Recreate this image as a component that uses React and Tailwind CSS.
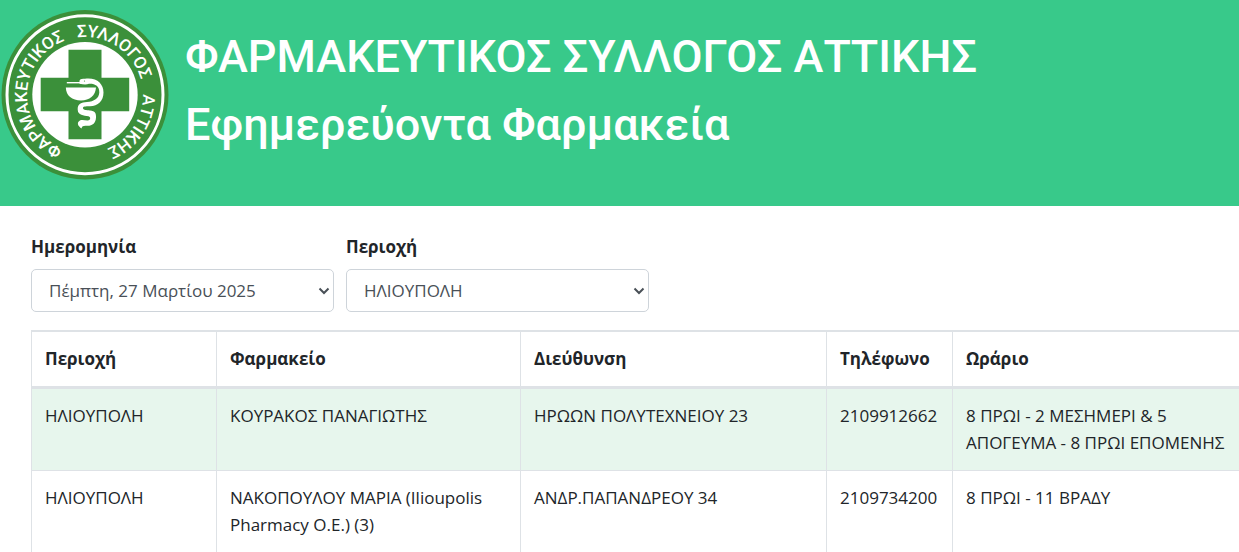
const rows = [
  {
    area: "ΗΛΙΟΥΠΟΛΗ",
    name: "ΚΟΥΡΑΚΟΣ ΠΑΝΑΓΙΩΤΗΣ",
    address: "ΗΡΩΩΝ ΠΟΛΥΤΕΧΝΕΙΟΥ 23",
    phone: "2109912662",
    hours: "8 ΠΡΩΙ - 2 ΜΕΣΗΜΕΡΙ & 5 ΑΠΟΓΕΥΜΑ - 8 ΠΡΩΙ ΕΠΟΜΕΝΗΣ",
  },
  {
    area: "ΗΛΙΟΥΠΟΛΗ",
    name: "ΝΑΚΟΠΟΥΛΟΥ ΜΑΡΙΑ (Ilioupolis Pharmacy Ο.Ε.) (3)",
    address: "ΑΝΔΡ.ΠΑΠΑΝΔΡΕΟΥ 34",
    phone: "2109734200",
    hours: "8 ΠΡΩΙ - 11 ΒΡΑΔΥ",
  },
];

const columns = ["Περιοχή", "Φαρμακείο", "Διεύθυνση", "Τηλέφωνο", "Ωράριο"];

function Logo() {
  return (
    <svg viewBox="0 0 168 170" className="h-[170px] w-[168px] shrink-0" role="img" aria-label="Φαρμακευτικός Σύλλογος Αττικής">
      <defs>
        <path id="ring" d="M84 143 A58 58 0 0 1 84 27 A58 58 0 0 1 84 143" />
      </defs>
      <ellipse cx="84" cy="84.7" rx="83.5" ry="84.7" fill="#3b903a" />
      <ellipse cx="84" cy="84.7" rx="78" ry="79" fill="none" stroke="#fff" strokeWidth="3" />
      <circle cx="84" cy="84.7" r="52.7" fill="#fff" />
      <path d="M67.5 39.8h33V67.7h27.7v33.5h-27.7V129.3h-33v-28.1H39.7V67.7H67.5z" fill="#3b903a" />
      <g className="font-['Roboto',sans-serif] text-[17px] font-medium" fill="#fff" textAnchor="middle">
        <text><textPath href="#ring" startOffset="25.3%">ΦΑΡΜΑΚΕΥΤΙΚΟΣ</textPath></text>
        <text><textPath href="#ring" startOffset="59.3%">ΣΥΛΛΟΓΟΣ</textPath></text>
        <text><textPath href="#ring" startOffset="84.3%">ΑΤΤΙΚΗΣ</textPath></text>
      </g>
      <path d="M64.8 77.5H95C94.5 85.5 88.5 90.5 80 90.5C71 90.5 65 85.5 64.8 77.5Z" fill="#fff" />
      <path d="M65.8 72.7H80" stroke="#fff" strokeWidth="1.4" />
      <path d="M78.5 71.6C78 69.3 80.5 68.3 84 68.8C96 67.3 102.5 74 102.5 82.5C102.5 91 97 96 89 96.3C84 96.5 82 96.2 82 98.1C82 100.1 85 100.3 89 100.5C94 100.8 95.3 103.5 95 107.5C94.8 113 91.5 116 86 115.8C82.5 115.5 81 116 80.5 118.5C77.5 116.5 76 114 77.5 111.8C79.5 109 83 110.3 86.5 110.5C89.5 110.7 90.3 107 87.5 106.3C82.5 105.5 77 105.5 76.7 99.8C76.3 93.5 80.5 92.5 86 92C93 91.5 98 88.5 98.3 82.5C98.5 76 94 73.5 88 73.8C85.5 75 82.5 74.7 78.5 73.8Z" fill="#fff" />
      <circle cx="83.5" cy="71" r="0.6" fill="#3b903a" />
    </svg>
  );
}

function Filter({ id, label, value }) {
  return (
    <div className="flex w-[303px] flex-col gap-[9px]">
      <label htmlFor={id} className="font-bold">{label}</label>
      <div className="grid items-center">
        <select id={id} className="col-start-1 row-start-1 h-[43px] w-full appearance-none rounded-[5px] border border-[#ced4da] bg-white px-[17px] text-[#495057]">
          <option>{value}</option>
        </select>
        <svg viewBox="0 0 12 8" className="pointer-events-none col-start-1 row-start-1 mr-1 h-2 w-3 justify-self-end" fill="none" stroke="#495057" strokeWidth="2" aria-hidden="true">
          <path d="M1.5 1.5L6 6L10.5 1.5" />
        </svg>
      </div>
    </div>
  );
}

export default function App() {
  return (
    <div className="bg-white font-['Open_Sans','Noto_Sans',sans-serif] text-[17px] leading-[27px] text-[#212529]">
      <header className="flex gap-4 bg-[#38c98a] pt-[10px] pb-[26px] pl-px text-white">
        <Logo />
        <h1 className="pt-[13px] font-['Roboto',sans-serif] text-[45px] leading-[68px] font-medium">
          ΦΑΡΜΑΚΕΥΤΙΚΟΣ ΣΥΛΛΟΓΟΣ ΑΤΤΙΚΗΣ
          <br />
          Εφημερεύοντα Φαρμακεία
        </h1>
      </header>
      <main className="pt-[27px] pl-[31px]">
        <form className="mb-[18px] flex flex-wrap gap-3">
          <Filter id="date" label="Ημερομηνία" value="Πέμπτη, 27 Μαρτίου 2025" />
          <Filter id="area" label="Περιοχή" value="ΗΛΙΟΥΠΟΛΗ" />
        </form>
        <table className="w-full min-w-[1208px] table-fixed border-separate border-spacing-0">
          <colgroup>
            <col className="w-[185px]" />
            <col className="w-[304px]" />
            <col className="w-[306px]" />
            <col className="w-[126px]" />
            <col />
          </colgroup>
          <thead>
            <tr>
              {columns.map((c) => (
                <th key={c} scope="col" className="border-t-2 border-b-3 border-l border-[#dee2e6] pt-[13px] pb-[14px] pl-[13px] text-left font-bold">
                  {c}
                </th>
              ))}
            </tr>
          </thead>
          <tbody>
            {rows.map((r) => (
              <tr key={r.phone} className="group odd:bg-[#e7f6ed]">
                {[r.area, r.name, r.address, r.phone, r.hours].map((v, i) => (
                  <td key={i} className="border-b border-l border-[#dee2e6] pt-[13px] pb-[14px] pl-[13px] align-top group-last:border-b-0">
                    {v}
                  </td>
                ))}
              </tr>
            ))}
          </tbody>
        </table>
      </main>
    </div>
  );
}
